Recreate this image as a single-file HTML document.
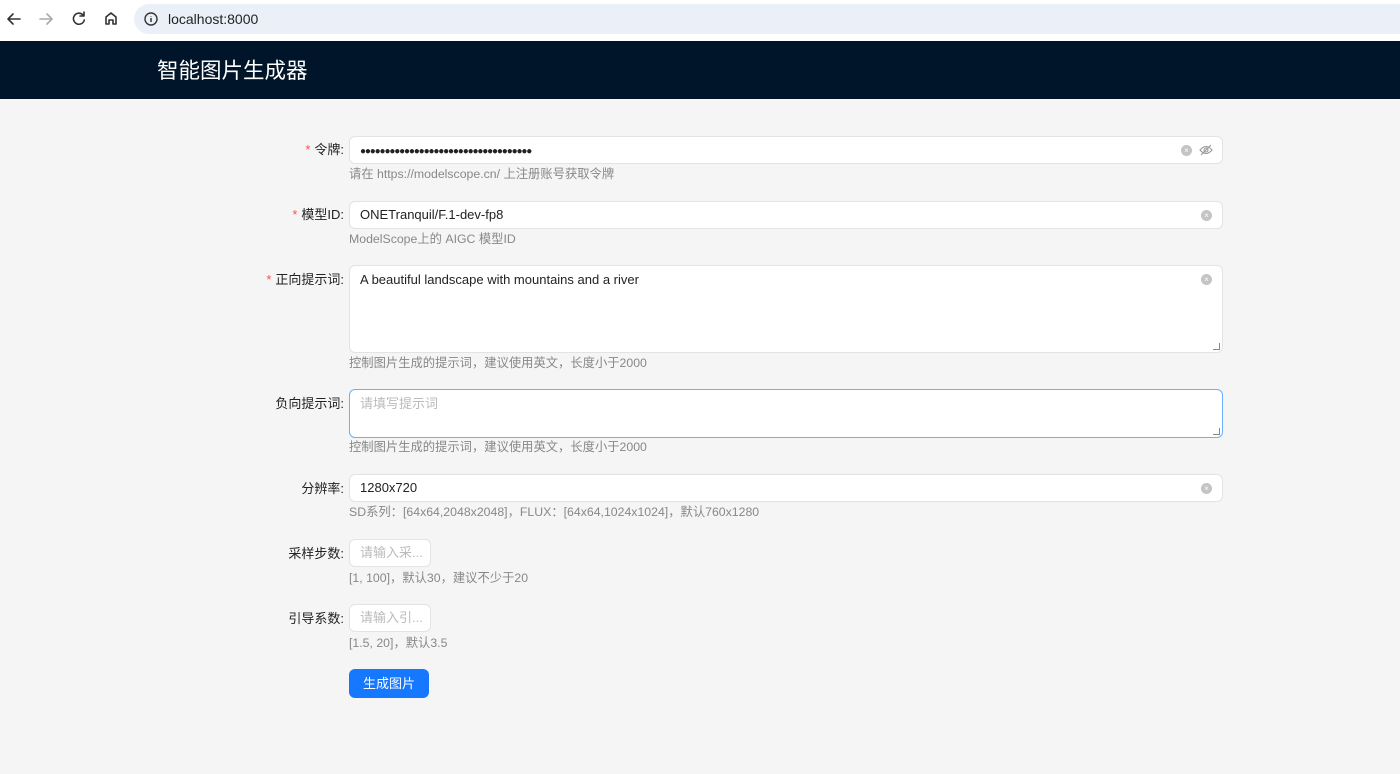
<!DOCTYPE html>
<html><head><meta charset="utf-8"><style>
*{box-sizing:border-box;margin:0;padding:0}
body{width:1400px;height:774px;overflow:hidden;background:#f5f5f5;font-family:"Liberation Sans","Noto Sans CJK SC",sans-serif;font-size:13px;color:#222;position:relative}
.top{position:absolute;left:0;top:0;width:1400px;height:41px;background:#fff}
.addr{position:absolute;left:134px;top:4px;right:0;height:30px;background:#ebf0f8;border-radius:15px 0 0 15px}
.url{position:absolute;left:168px;top:11px;font-size:14px;color:#222}
.hdr{position:absolute;left:0;top:41px;width:1400px;height:58px;background:#001529}
.hdr h1{position:absolute;left:157px;top:16px;font-size:21.5px;font-weight:normal;color:#fff;line-height:28px}
.lbl{position:absolute;right:1056px;font-size:13px;color:#222;white-space:nowrap;line-height:28px}
.lbl .s{color:#ff4d4f;margin-right:4px}
.inp{position:absolute;left:349px;width:874px;height:28px;background:#fff;border:1px solid #e3e3e3;border-radius:6px;padding:0 10px;line-height:26px;font-size:13px;white-space:nowrap;overflow:hidden}
.help{position:absolute;left:349px;font-size:12.3px;color:#888;line-height:18px;white-space:nowrap}
.clr{position:absolute;right:10px;top:8px;width:11px;height:11px;border-radius:50%;background:#c4c4c4;color:#fff;font-size:8px;line-height:11px;text-align:center}
.ph{color:#bbb}
.btn{position:absolute;left:349px;top:669px;width:80px;height:29px;background:#1677ff;color:#fff;border-radius:6px;text-align:center;line-height:29px;font-size:13px}
.grip{position:absolute;right:2px;bottom:2px;width:7px;height:7px;border-right:1px solid #888;border-bottom:1px solid #888}
.dots{font-size:10px;letter-spacing:-1.15px}
</style></head><body>
<div class="top">
<svg width="130" height="40" style="position:absolute;left:0;top:0" fill="none" stroke-width="1.6" stroke-linecap="round" stroke-linejoin="round">
<path d="M20 19H8M13 14l-5 5 5 5" stroke="#333"/>
<path d="M40 19h12M47 14l5 5-5 5" stroke="#aaa"/>
<path d="M83 15a5.5 5.5 0 1 0 1.3 5M84 12v4h-4" stroke="#333"/>
<path d="M106 24v-7l5-4 5 4v7h-3v-4h-4v4z" stroke="#333"/>
</svg>
<div class="addr"></div>
<svg width="14" height="14" style="position:absolute;left:144px;top:12px"><circle cx="7" cy="7" r="6" fill="none" stroke="#333" stroke-width="1.4"/><path d="M7 6v4M7 4v.5" stroke="#333" stroke-width="1.5"/></svg>
<div class="url">localhost:8000</div>
</div>
<div class="hdr"><h1>智能图片生成器</h1></div>

<div class="lbl" style="top:136px"><span class="s">*</span>令牌:</div>
<div class="inp" style="top:136px"><span class="dots">●●●●●●●●●●●●●●●●●●●●●●●●●●●●●●●●●●●</span><span class="clr" style="right:30px">×</span>
<svg width="14" height="12" style="position:absolute;right:9px;top:7px" fill="none" stroke="#999" stroke-width="1.1"><path d="M1 6q6-7 12 0q-6 7-12 0z"/><circle cx="7" cy="6" r="2"/><path d="M2 11L12 1"/></svg></div>
<div class="help" style="top:165px">请在 https://modelscope.cn/ 上注册账号获取令牌</div>

<div class="lbl" style="top:201px"><span class="s">*</span>模型ID:</div>
<div class="inp" style="top:201px">ONETranquil/F.1-dev-fp8<span class="clr">×</span></div>
<div class="help" style="top:230px">ModelScope上的 AIGC 模型ID</div>

<div class="lbl" style="top:266px"><span class="s">*</span>正向提示词:</div>
<div class="inp" style="top:265px;height:88px;padding-top:1px">A beautiful landscape with mountains and a river<span class="clr">×</span><span class="grip"></span></div>
<div class="help" style="top:354px">控制图片生成的提示词，建议使用英文，长度小于2000</div>

<div class="lbl" style="top:390px">负向提示词:</div>
<div class="inp ph" style="top:389px;height:49px;border-color:#69b1ff;padding-top:1px">请填写提示词<span class="grip"></span></div>
<div class="help" style="top:438px">控制图片生成的提示词，建议使用英文，长度小于2000</div>

<div class="lbl" style="top:475px">分辨率:</div>
<div class="inp" style="top:474px">1280x720<span class="clr">×</span></div>
<div class="help" style="top:503px">SD系列：[64x64,2048x2048]，FLUX：[64x64,1024x1024]，默认760x1280</div>

<div class="lbl" style="top:540px">采样步数:</div>
<div class="inp ph" style="top:539px;width:82px">请输入采...</div>
<div class="help" style="top:569px">[1, 100]，默认30，建议不少于20</div>

<div class="lbl" style="top:605px">引导系数:</div>
<div class="inp ph" style="top:604px;width:82px">请输入引...</div>
<div class="help" style="top:634px">[1.5, 20]，默认3.5</div>

<div class="btn">生成图片</div>
</body></html>
